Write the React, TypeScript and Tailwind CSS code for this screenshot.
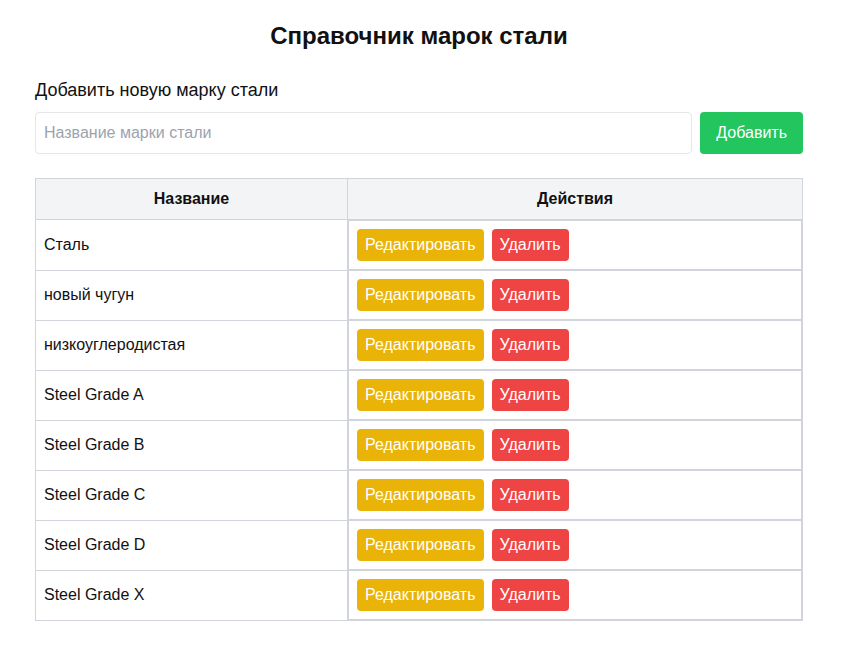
const grades = [
  "Сталь",
  "новый чугун",
  "низкоуглеродистая",
  "Steel Grade A",
  "Steel Grade B",
  "Steel Grade C",
  "Steel Grade D",
  "Steel Grade X",
];

export default function App() {
  return (
    <div className="min-h-screen bg-white font-['Liberation_Sans',Arial,sans-serif] text-[#111111]">
      <div className="flex justify-center pr-[10px] pt-5">
        <div className="w-[768px]">
          <h1 className="mb-6 text-center text-2xl font-bold">Справочник марок стали</h1>

          <h2 className="mb-2 text-lg">Добавить новую марку стали</h2>
          <div className="mb-6 flex gap-2">
            <input
              type="text"
              placeholder="Название марки стали"
              className="flex-1 rounded border border-[#e5e7eb] p-2 text-base outline-none placeholder:text-[#9ca3af]"
            />
            <button className="rounded bg-[#22c55e] px-4 py-2 text-white">Добавить</button>
          </div>

          <table className="w-full border-collapse border border-[#d1d5db]">
            <thead>
              <tr className="bg-[#f3f4f6]">
                <th className="w-[312px] border border-[#d1d5db] px-4 py-2 font-bold">Название</th>
                <th className="border border-[#d1d5db] px-4 py-2 font-bold">Действия</th>
              </tr>
            </thead>
            <tbody>
              {grades.map((g) => (
                <tr key={g}>
                  <td className="border border-[#d1d5db] px-2 py-2">{g}</td>
                  <td className="flex gap-2 border border-[#d1d5db] p-2">
                    <button className="rounded bg-[#eab308] px-2 py-1 text-white">Редактировать</button>
                    <button className="rounded bg-[#ef4444] px-2 py-1 text-white">Удалить</button>
                  </td>
                </tr>
              ))}
            </tbody>
          </table>
        </div>
      </div>
    </div>
  );
}
